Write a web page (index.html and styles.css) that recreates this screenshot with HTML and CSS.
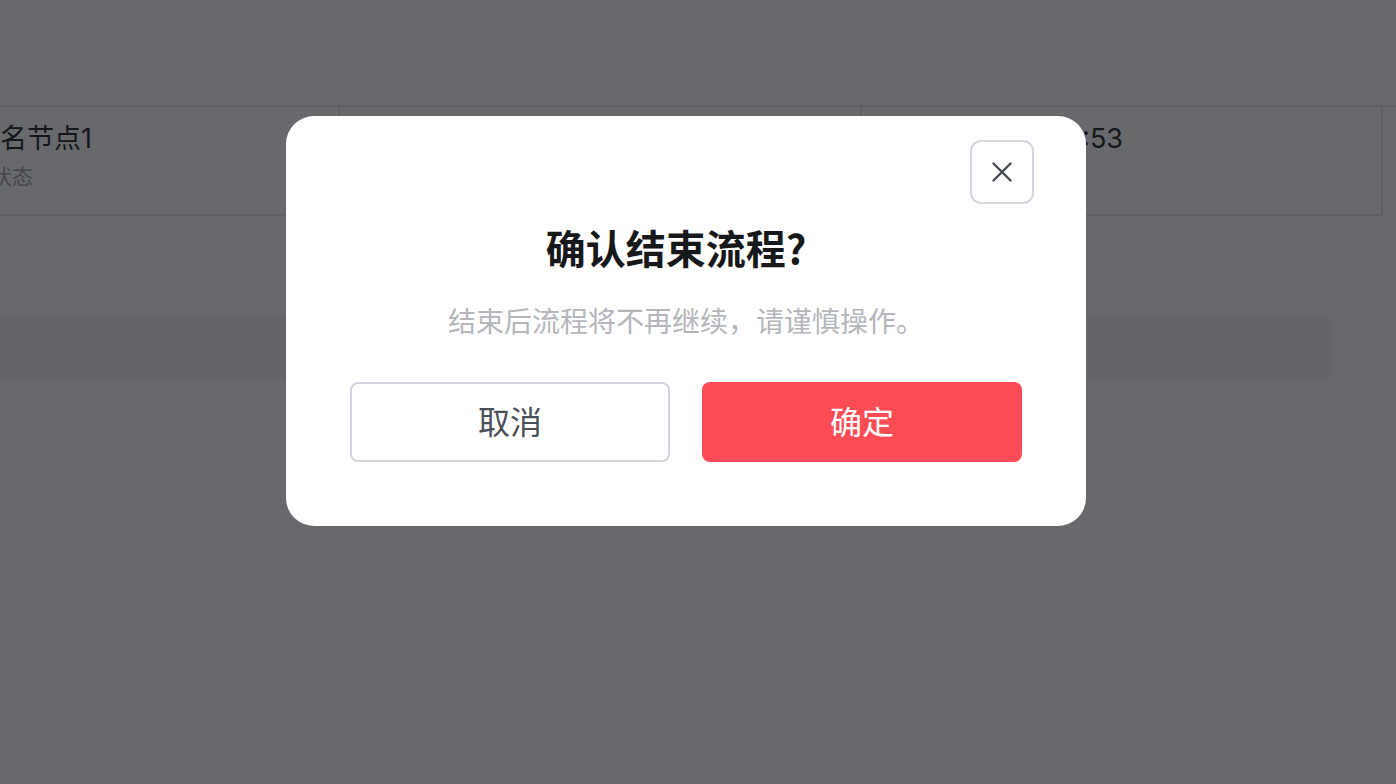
FILE: index.html
```html
<!DOCTYPE html>
<html lang="zh-CN">
<head>
<meta charset="utf-8">
<title>确认结束流程</title>
<link rel="stylesheet" href="styles.css">
</head>
<body>
<div class="page">
  <div class="header"></div>
  <div class="row">
    <div class="cell cell-a">
      <div class="main-text">名节点1</div>
      <div class="sub-text">状态</div>
    </div>
    <div class="cell cell-b"></div>
    <div class="cell cell-c">
      <div class="main-text">2023-06-18 10:12:53</div>
    </div>
  </div>
  <div class="bar"></div>
</div>
<div class="overlay">
  <div class="modal">
    <button class="close" aria-label="关闭">
      <svg width="20" height="20" viewBox="0 0 20 20"><path d="M1.5 1.5 L18.5 18.5 M18.5 1.5 L1.5 18.5" stroke="#464a52" stroke-width="2.4" stroke-linecap="round" fill="none"/></svg>
    </button>
    <h1 class="title">确认结束流程?</h1>
    <p class="desc">结束后流程将不再继续，请谨慎操作。</p>
    <div class="actions">
      <button class="btn btn-cancel">取消</button>
      <button class="btn btn-ok">确定</button>
    </div>
  </div>
</div>
</body>
</html>
```

FILE: styles.css
```css
* { box-sizing: border-box; }
html, body { margin: 0; padding: 0; }
body {
  width: 1396px;
  height: 784px;
  overflow: hidden;
  background: #ffffff;
  font-family: "Noto Sans CJK SC", "Noto Sans", sans-serif;
  position: relative;
}
.page { width: 1396px; height: 784px; }
.header { height: 107px; border-bottom: 2px solid #e8e9eb; }
.row {
  display: flex;
  height: 109px;
  width: 1383px;
  border-bottom: 2px solid #e8e9eb;
  border-right: 2px solid #e8e9eb;
}
.cell { border-right: 2px solid #e8e9eb; padding-top: 14px; }
.cell-a { width: 340px; flex-shrink: 0; }
.cell-b { width: 522px; flex-shrink: 0; }
.cell-c {
  flex: 1;
  min-width: 0;
  border-right: none;
  padding-right: 258px;
  display: flex;
  justify-content: flex-end;
  align-items: flex-start;
}
.main-text {
  font-family: "Inter", "Noto Sans CJK SC", sans-serif;
  font-size: 27px;
  line-height: 36px;
  color: #333436;
  white-space: nowrap;
}
.cell-c .main-text { flex-shrink: 0; }
.sub-text { font-size: 21px; line-height: 28px; margin-top: 4px; margin-left: -9px; color: #a8a9ab; }
.bar {
  margin-top: 99px;
  width: 1333px;
  height: 65px;
  background: #f3f4f6;
  border-radius: 0 10px 10px 0;
}
.overlay {
  position: absolute;
  inset: 0;
  background: rgba(3, 5, 10, 0.6);
  padding: 116px 0 0 286px;
}
.modal {
  position: relative;
  width: 800px;
  height: 410px;
  background: #ffffff;
  border-radius: 28px;
  padding: 106px 64px 64px;
  display: flex;
  flex-direction: column;
  align-items: center;
}
.close {
  position: absolute;
  top: 24px;
  right: 52px;
  width: 64px;
  height: 64px;
  border: 2px solid #d3d7e0;
  border-radius: 11px;
  background: #fff;
  display: flex;
  align-items: center;
  justify-content: center;
  padding: 0;
}
.title {
  margin: 0;
  padding-right: 20px;
  font-size: 40px;
  line-height: 50px;
  font-weight: 700;
  color: #17181a;
}
.desc {
  margin: 31px 0 0;
  font-size: 28px;
  line-height: 34px;
  color: #b4b6bb;
}
.actions {
  margin-top: 45px;
  display: flex;
  gap: 32px;
  width: 100%;
}
.btn {
  width: 320px;
  height: 80px;
  border-radius: 8px;
  font-family: "Noto Sans CJK SC", "Noto Sans", sans-serif;
  font-size: 32px;
  line-height: 1;
  padding: 0 0 4px;
}
.btn-cancel {
  background: #fff;
  border: 2px solid #cfd4de;
  color: #4a4f58;
}
.btn-ok {
  background: #fd4c55;
  border: none;
  color: #ffffff;
}
```
